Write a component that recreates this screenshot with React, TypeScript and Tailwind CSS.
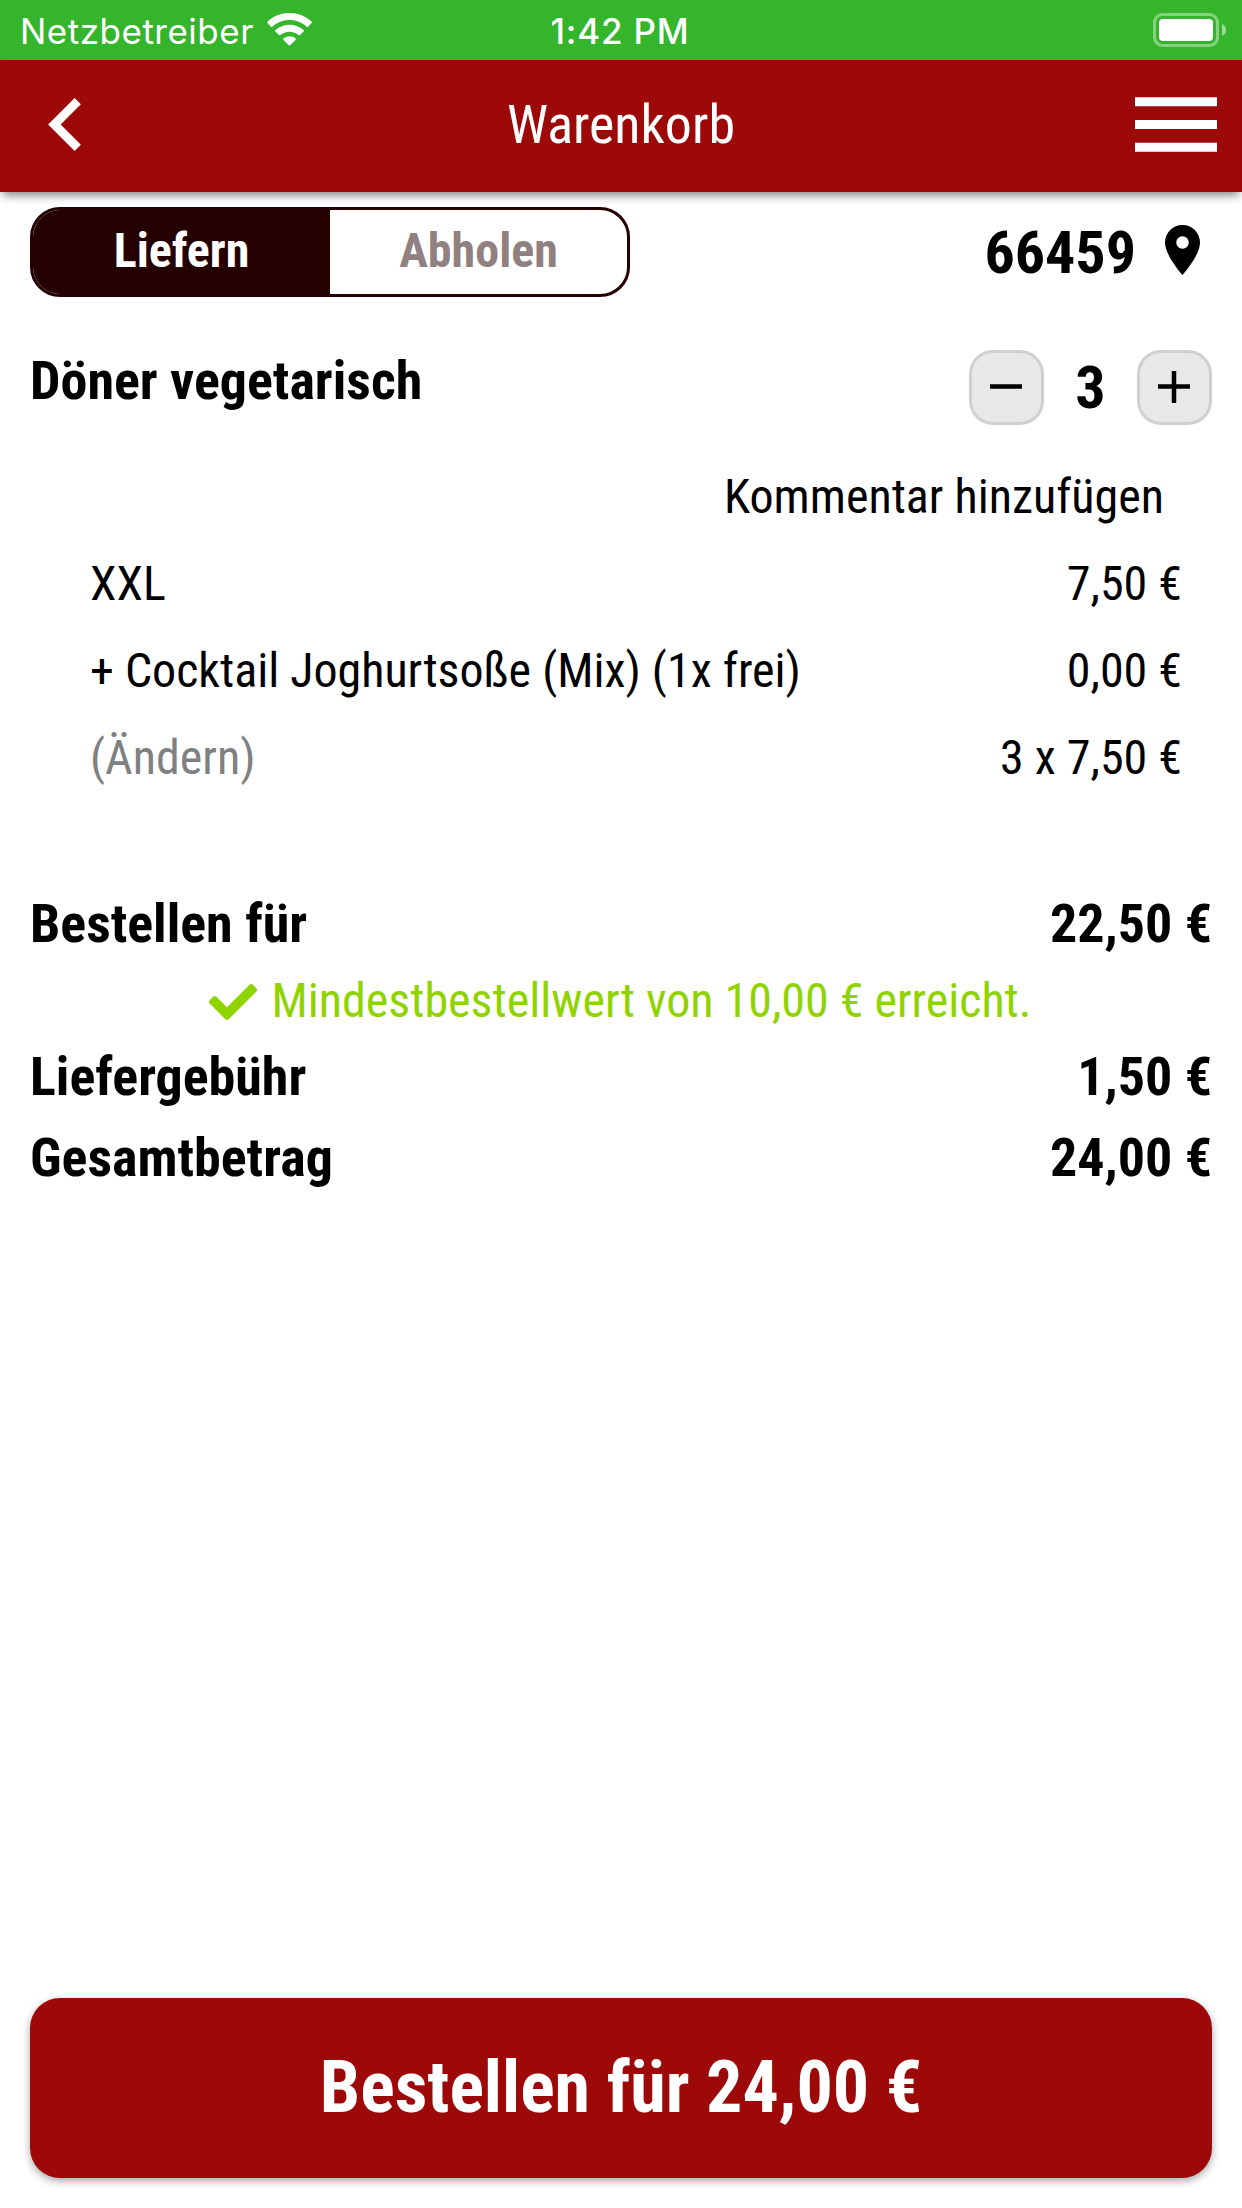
import React, { useState } from 'react';
import { FaCheck } from 'react-icons/fa';

const positions = [
  { label: 'XXL', price: '7,50 €' },
  { label: '+ Cocktail Joghurtsoße (Mix) (1x frei)', price: '0,00 €' },
];

const StatusBar: React.FC = () => (
  <div className="h-[60px] bg-[#34b52b] text-white grid grid-cols-3 items-center pl-[20px] pr-[15px] font-['Inter',sans-serif] text-[35px] leading-[58px]">
    <div className="flex items-center gap-[13px]">
      <span className="tracking-[0.5px] pt-[2px]">Netzbetreiber</span>
      <svg className="w-[45px] h-[33px] mb-[1px]" viewBox="0 0 45 33" fill="currentColor">
        <path d="M22.500 0C31 0 39 3.300 44.600 8.700a1 1 0 0 1 0 1.400L41 13.700a1 1 0 0 1-1.400 0C35 9.500 29 7.100 22.500 7.100S10 9.500 5.400 13.700a1 1 0 0 1-1.400 0L.4 10.100a1 1 0 0 1 0-1.400C6 3.300 14 0 22.500 0z" />
        <path d="M22.500 11.700c5.400 0 10.300 2 14.100 5.300a1 1 0 0 1 0 1.500L33 22a1 1 0 0 1-1.400 0c-2.400-2-5.600-3.300-9.100-3.300S15.800 20 13.400 22A1 1 0 0 1 12 22l-3.600-3.500a1 1 0 0 1 0-1.500c3.800-3.300 8.700-5.300 14.100-5.300z" />
        <path d="M22.500 23.300c2.300 0 4.400.8 6 2.100a1 1 0 0 1 0 1.500l-5.300 5.300a1 1 0 0 1-1.400 0l-5.300-5.300a1 1 0 0 1 0-1.500c1.600-1.300 3.700-2.100 6-2.100z" />
      </svg>
    </div>
    <div className="text-center font-medium tracking-[0.8px] pt-[2px] pr-[7px]">1:42 PM</div>
    <div className="flex items-center justify-end">
      <svg className="w-[74px] h-[34px]" viewBox="0 0 74 34">
        <rect x="1.500" y="1.500" width="63" height="31" rx="8" fill="none" stroke="#fff" strokeOpacity="0.4" strokeWidth="3" />
        <rect x="6" y="6" width="54" height="22" rx="4" fill="#fff" />
        <path d="M69 11c2.700 1 4.200 3.200 4.200 6S71.700 22 69 23z" fill="#fff" fillOpacity="0.5" />
      </svg>
    </div>
  </div>
);

const HeaderBar: React.FC = () => (
  <header className="h-[132px] bg-[#9d0909] text-white grid grid-cols-3 items-center pl-[48px] pr-[25px] shadow-[0_6px_9px_-3px_rgba(0,0,0,0.5)]">
    <button className="w-[33px] pb-[3px]">
      <svg className="w-[33px] h-[53px]" viewBox="8 6 7.41 12" fill="currentColor">
        <path d="M15.410 7.410 14 6l-6 6 6 6 1.410-1.410L10.830 12z" />
      </svg>
    </button>
    <h1 className="text-center text-[54px] leading-[60px] pb-[3px] pr-[23px]">Warenkorb</h1>
    <button className="justify-self-end pb-[3px]">
      <svg className="w-[82px] h-[55px]" viewBox="3 6 18 12" fill="currentColor">
        <path d="M3 18h18v-2H3v2zm0-5h18v-2H3v2zm0-7v2h18V6H3z" />
      </svg>
    </button>
  </header>
);

const StepButton: React.FC<{ plus?: boolean; onClick: () => void }> = ({ plus, onClick }) => (
  <button
    onClick={onClick}
    className="w-[75px] h-[75px] rounded-[24px] border-3 border-[#d0d0d0] bg-[#e8e8e8] flex items-center justify-center pr-[1px] pb-[1px]"
  >
    <svg className="w-[32px] h-[32px]" viewBox="0 0 32 32" fill="none" stroke="#000" strokeWidth="4.500">
      <path d={plus ? 'M0 15.500h32M16 0v32' : 'M0 15.500h32'} />
    </svg>
  </button>
);

const SumRow: React.FC<{ label: string; value: string; className: string }> = ({ label, value, className }) => (
  <div className={`flex justify-between items-center font-bold text-[54px] ${className}`}>
    <span>{label}</span>
    <span>{value}</span>
  </div>
);

const App: React.FC = () => {
  const [delivery, setDelivery] = useState(true);
  const [count, setCount] = useState(3);

  return (
    <div className="min-h-[2208px] flex flex-col bg-white text-black font-['Roboto_Condensed','Roboto',sans-serif] font-stretch-condensed">
      <StatusBar />
      <HeaderBar />

      <main className="flex-1 px-[30px] pt-[15px]">
        <div className="flex justify-between items-center h-[90px]">
          <div className="w-[600px] h-[90px] rounded-[30px] border-3 border-[#240000] overflow-hidden grid grid-cols-2 text-[48px] leading-[80px] font-bold">
            <button
              onClick={() => setDelivery(true)}
              className={`pb-[2px] ${delivery ? 'bg-[#240000] text-white' : 'text-[#918080]'}`}
            >
              Liefern
            </button>
            <button
              onClick={() => setDelivery(false)}
              className={`pb-[2px] ${delivery ? 'text-[#918080]' : 'bg-[#240000] text-white'}`}
            >
              Abholen
            </button>
          </div>
          <div className="flex items-center gap-[29px] pr-[12px]">
            <span className="text-[60px] leading-[88px] pt-[2px] font-bold">66459</span>
            <svg className="w-[35px] h-[50px] mb-[4px]" viewBox="5 2 14 20" fill="currentColor">
              <path d="M12 2C8.130 2 5 5.130 5 9c0 5.250 7 13 7 13s7-7.750 7-13c0-3.870-3.130-7-7-7zm0 9.500a2.500 2.500 0 0 1 0-5 2.500 2.500 0 0 1 0 5z" />
            </svg>
          </div>
        </div>

        <div className="flex justify-between h-[75px] mt-[53px]">
          <h2 className="text-[54px] leading-[61px] font-bold">Döner vegetarisch</h2>
          <div className="flex items-center">
            <StepButton onClick={() => setCount(Math.max(0, count - 1))} />
            <span className="w-[93px] text-center text-[60px] leading-[75px] font-bold">{count}</span>
            <StepButton plus onClick={() => setCount(count + 1)} />
          </div>
        </div>

        <div className="mt-[28px] pl-[60px] pr-[30px] text-[48px] leading-[87px]">
          <div className="text-right pr-[18px]">Kommentar hinzufügen</div>
          {positions.map((p) => (
            <div key={p.label} className="flex justify-between">
              <span>{p.label}</span>
              <span>{p.price}</span>
            </div>
          ))}
          <div className="flex justify-between">
            <span className="text-[#808080]">(Ändern)</span>
            <span>{count} x 7,50 €</span>
          </div>
        </div>

        <SumRow label="Bestellen für" value="22,50 €" className="mt-[82px] h-[81px]" />
        <div className="flex items-center justify-center gap-[15px] h-[72px] pr-[2px] text-[48px] text-[#8fd300]">
          <FaCheck className="w-[48px] h-[48px] mt-[3px]" />
          <span className="pt-[2px]">Mindestbestellwert von 10,00 € erreicht.</span>
        </div>
        <SumRow label="Liefergebühr" value="1,50 €" className="h-[81px]" />
        <SumRow label="Gesamtbetrag" value="24,00 €" className="h-[81px]" />
      </main>

      <footer className="px-[30px] pb-[30px]">
        <button className="w-full h-[180px] rounded-[30px] bg-[#9d0909] text-white text-[72px] leading-[180px] font-bold shadow-[0_3px_9px_rgba(0,0,0,0.35)]">
          Bestellen für 24,00 €
        </button>
      </footer>
    </div>
  );
};

export default App;
